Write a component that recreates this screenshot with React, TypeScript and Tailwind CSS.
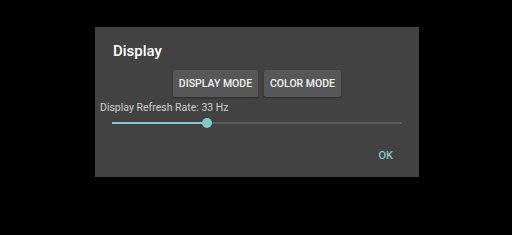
export default function App() {
  return (
    <div
      className="w-[512px] h-[235px] bg-black pt-[27px] pl-[95px]"
      style={{ fontFamily: "Roboto, 'Noto Sans', sans-serif" }}
    >
      <div className="w-[324px] h-[150px] bg-[#424242] flex flex-col">
        <div className="pl-[18px] pt-[15px] text-[15px] font-medium leading-[18px] text-white">
          Display
        </div>
        <div className="flex justify-center gap-[6px] mt-[10px]">
          <button className="w-[85px] h-[27px] rounded-[2px] bg-[#575757] text-[10.5px] font-medium text-[#f2f2f2] shadow-[0_1px_2px_rgba(0,0,0,0.35)]">
            DISPLAY MODE
          </button>
          <button className="w-[77px] h-[27px] rounded-[2px] bg-[#575757] text-[10.5px] font-medium text-[#f2f2f2] shadow-[0_1px_2px_rgba(0,0,0,0.35)]">
            COLOR MODE
          </button>
        </div>
        <div className="pl-[5px] mt-[4px] text-[10.5px] leading-[13px] text-[#cfcfcf]">
          Display Refresh Rate: 33 Hz
        </div>
        <div className="mx-[17px] mt-[4px] h-[10px] relative flex items-center">
          <div className="w-full h-[2px] bg-[#5e5e5e] flex">
            <div className="w-[95px] h-[2px] bg-[#80cbc4]" />
          </div>
          <div className="absolute left-[90px] top-0 w-[10px] h-[10px] rounded-full bg-[#80cbc4]" />
        </div>
        <div className="self-end mr-[26px] mt-[21px] text-[11px] leading-[13px] font-medium text-[#80cbc4]">
          OK
        </div>
      </div>
    </div>
  );
}
